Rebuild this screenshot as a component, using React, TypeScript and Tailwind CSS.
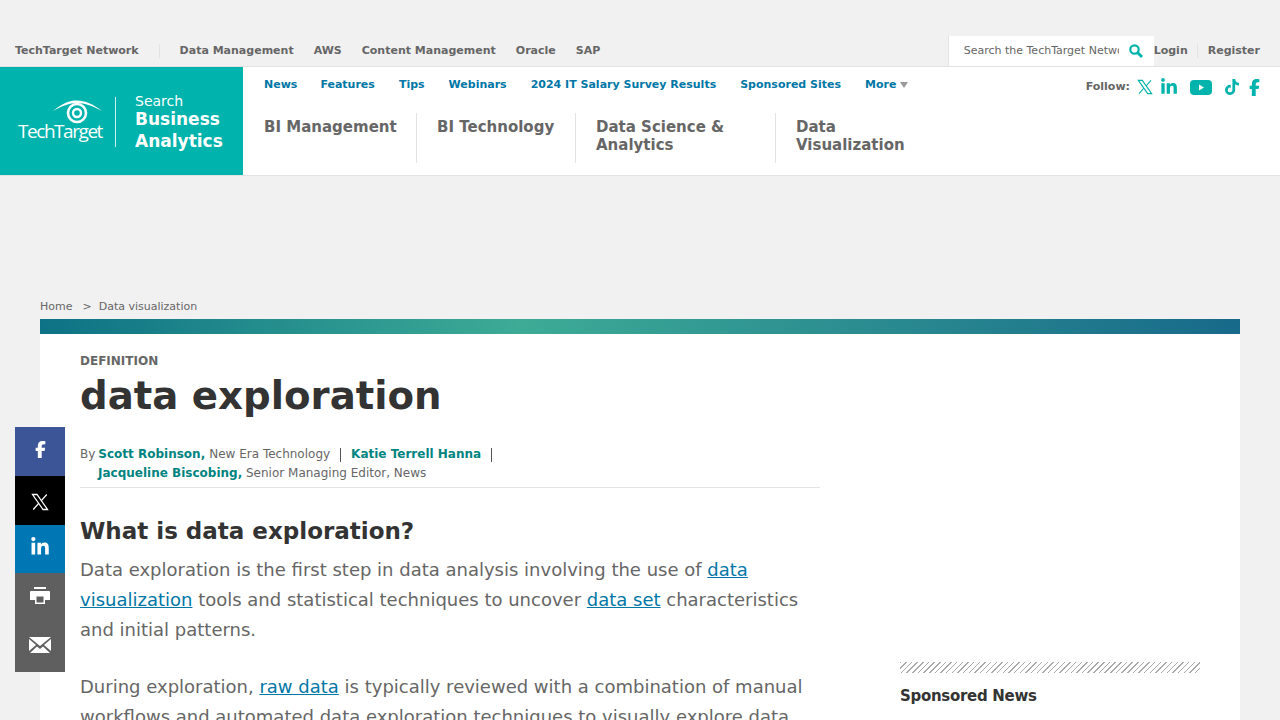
import { FaFacebookF, FaLinkedinIn, FaTiktok } from "react-icons/fa6";

const network = ["Data Management", "AWS", "Content Management", "Oracle", "SAP"];
const subNav = ["Features", "Tips", "Webinars", "2024 IT Salary Survey Results", "Sponsored Sites"];

function EyeLogo() {
  return (
    <svg width="50" height="28" viewBox="0 0 50 28" className="block">
      <path d="M0 11 C10 3 16 0.5 24 0.5 C32 0.5 40 4 49 11 C40 6 32 3 24 3 C16 3 9 6 0 11 Z" fill="#fff" />
      <circle cx="24" cy="13" r="9" fill="none" stroke="#fff" strokeWidth="2.6" />
      <circle cx="24" cy="13" r="4" fill="none" stroke="#fff" strokeWidth="2.4" />
    </svg>
  );
}

function SearchIcon() {
  return (
    <svg width="14" height="14" viewBox="0 0 14 14" fill="none" stroke="currentColor" className="ml-[10px]">
      <circle cx="5.5" cy="5.5" r="4.2" strokeWidth="2.2" />
      <path d="M8.5 8.5 L13 13" strokeWidth="2.8" />
    </svg>
  );
}

function XIcon({ size }: { size: number }) {
  return (
    <svg width={size} height={size} viewBox="0 0 24 24" fill="none" stroke="currentColor" strokeWidth="1.7">
      <path d="M2 2 H8 L22 22 H16 Z" />
      <path d="M21 2 L13.5 10.5 M3 22 L10.5 13.5" />
    </svg>
  );
}

function YoutubeIcon() {
  return (
    <svg width="22" height="15" viewBox="0 0 22 15">
      <rect width="22" height="15" rx="4" fill="currentColor" />
      <path d="M9 4.5 L14 7.5 L9 10.5 Z" fill="#fff" />
    </svg>
  );
}

function PrintIcon() {
  return (
    <svg width="20" height="17" viewBox="0 0 20 17">
      <rect x="4" y="0" width="12" height="2" fill="#fff" />
      <path d="M1 4 H19 Q20 4 20 5 V13 H0 V5 Q0 4 1 4 Z" fill="#fff" />
      <rect x="5.75" y="8.75" width="8.5" height="7.5" fill="#5f5f5f" stroke="#fff" strokeWidth="1.5" />
    </svg>
  );
}

function MailIcon() {
  return (
    <svg width="22" height="16" viewBox="0 0 22 16">
      <path d="M0 0 L22 0 L11 9 Z" fill="#fff" />
      <path d="M0 2 L7 8 L0 14 Z M22 2 L15 8 L22 14 Z" fill="#fff" />
      <path d="M1 16 L8 9.5 L11 12 L14 9.5 L21 16 Z" fill="#fff" />
    </svg>
  );
}

function TopBar() {
  return (
    <div className="flex h-[67px] items-end border-b border-[#e3e3e3] bg-[#f1f1f1]">
      <div className="flex h-[30px] w-full items-center text-[11px] font-bold text-[#666]">
        <span className="ml-[15px]">TechTarget Network</span>
        <span className="mx-5 h-3.5 w-px bg-[#e3e3e3]" />
        <div className="flex gap-5">
          {network.map((item) => (
            <span key={item}>{item}</span>
          ))}
        </div>
        <div className="ml-auto flex h-full w-[206px] items-center border-l border-[#e3e3e3] bg-white pl-[15px] text-[#00b3ac]">
          <input
            readOnly
            placeholder="Search the TechTarget Network"
            className="w-[155px] bg-transparent text-[11px] font-normal outline-none placeholder:text-[#666]"
          />
          <SearchIcon />
        </div>
        <span>Login</span>
        <span className="ml-[9px] mr-[10px] h-3.5 w-px bg-[#e3e3e3]" />
        <span className="mr-5">Register</span>
      </div>
    </div>
  );
}

function Header() {
  return (
    <header className="flex h-[109px] border-b border-[#e3e3e3] bg-white">
      <div className="flex h-[108px] w-[243px] shrink-0 items-center bg-[#00b3ac] pl-[18px] text-white">
        <div className="flex w-[84px] flex-col">
          <div className="ml-[35px]">
            <EyeLogo />
          </div>
          <span className="-mt-[9px] whitespace-nowrap font-['Open_Sans'] text-[19px] leading-6 font-medium tracking-[-1.45px]">
            TechTarget
          </span>
        </div>
        <div className="ml-[13px] mt-0.5 h-[50px] w-px bg-white/80" />
        <div className="ml-[19px] pt-1">
          <div className="text-[14px] leading-[14px]">Search</div>
          <div className="text-[17px] leading-[22px] font-bold">Business</div>
          <div className="text-[17px] leading-[22px] font-bold">Analytics</div>
        </div>
      </div>
      <div className="min-w-0 flex-1 pl-[21px]">
        <div className="flex h-9 items-start pt-[10px] text-[11px] font-bold text-[#0077a6]">
          <div className="flex gap-6">
            <span className="-mr-px">News</span>
            {subNav.map((item) => (
              <span key={item}>{item}</span>
            ))}
            <span className="flex items-center gap-1">
              More
              <span className="h-0 w-0 border-x-4 border-t-[6px] border-x-transparent border-t-[#999]" />
            </span>
          </div>
          <div className="ml-auto mr-[17px] flex items-center pt-px text-[#00b3ac]">
            <span className="text-[11px] text-[#666]">Follow:</span>
            <span className="ml-[7px]">
              <XIcon size={16} />
            </span>
            <FaLinkedinIn className="ml-[7px] text-[18px]" />
            <span className="ml-[12px]">
              <YoutubeIcon />
            </span>
            <FaTiktok className="ml-[12px] text-[16px]" />
            <FaFacebookF className="ml-[6px] text-[17px]" />
          </div>
        </div>
        <nav className="flex text-[15px] font-bold leading-[18px] text-[#666]">
          <div className="mt-[10px] h-[50px] w-[153px] border-r border-[#e3e3e3] pt-[5px]">BI Management</div>
          <div className="mt-[10px] h-[50px] w-[159px] border-r border-[#e3e3e3] pl-5 pt-[5px]">BI Technology</div>
          <div className="mt-[10px] h-[50px] w-[200px] border-r border-[#e3e3e3] pl-5 pt-[5px]">
            Data Science &amp;
            <br />
            Analytics
          </div>
          <div className="mt-[10px] pl-5 pt-[5px]">
            Data
            <br />
            Visualization
          </div>
        </nav>
      </div>
    </header>
  );
}

function ShareRail() {
  const itemClass = "flex items-center justify-center text-white";
  return (
    <div className="absolute left-[15px] top-[427px] w-[50px]">
      <div className={`${itemClass} h-[49px] bg-[#3b5596] pb-[5px] text-[17px]`}>
        <FaFacebookF />
      </div>
      <div className={`${itemClass} h-[49px] bg-black pt-[3px]`}>
        <XIcon size={18} />
      </div>
      <div className={`${itemClass} h-[48px] bg-[#0077b5] pb-[5px] text-[20px]`}>
        <FaLinkedinIn />
      </div>
      <div className={`${itemClass} h-[49px] bg-[#5f5f5f] pb-[5px]`}>
        <PrintIcon />
      </div>
      <div className={`${itemClass} h-[50px] bg-[#5f5f5f] pb-[4px]`}>
        <MailIcon />
      </div>
    </div>
  );
}

function Article() {
  const linkClass = "text-[#0077a6] underline";
  return (
    <div className="w-[740px] shrink-0">
      <div className="pt-[19px] text-[12px] leading-[16px] font-bold text-[#666]">DEFINITION</div>
      <h1 className="mt-[2px] text-[38.7px] leading-[50px] font-bold text-[#333]">data exploration</h1>
      <div className="mt-[24px] border-b border-[#e3e3e3] pb-[4px] text-[12px] leading-[19px] text-[#666]">
        <div className="flex items-center">
          <span>By</span>
          <span className="ml-[3px] font-bold text-[#00847f]">Scott Robinson,</span>
          <span className="ml-1">New Era Technology</span>
          <span className="mx-[10px] h-3.5 w-px bg-[#555]" />
          <span className="font-bold text-[#00847f]">Katie Terrell Hanna</span>
          <span className="ml-[10px] h-3.5 w-px bg-[#555]" />
        </div>
        <div className="pl-[18px]">
          <span className="font-bold text-[#00847f]">Jacqueline Biscobing,</span> Senior Managing Editor, News
        </div>
      </div>
      <h2 className="mt-[27px] text-[23px] leading-[32px] font-bold text-[#333]">What is data exploration?</h2>
      <p className="mt-[8px] text-[18px] leading-[30px] text-[#666]">
        Data exploration is the first step in data analysis involving the use of{" "}
        <a className={linkClass}>data visualization</a> tools and statistical techniques to uncover{" "}
        <a className={linkClass}>data set</a> characteristics and initial patterns.
      </p>
      <p className="mt-[27px] text-[18px] leading-[30px] text-[#666]">
        During exploration, <a className={linkClass}>raw data</a> is typically reviewed with a combination of manual
        workflows and automated data exploration techniques to visually explore data
      </p>
    </div>
  );
}

export default function App() {
  return (
    <div className="relative h-screen overflow-hidden bg-[#f1f1f1] font-['DejaVu_Sans',sans-serif]">
      <TopBar />
      <Header />
      <div className="mx-10">
        <div className="flex h-[143px] items-end pb-[4px] text-[11px] leading-4 text-[#666]">
          <span>Home</span>
          <span className="ml-[10px] mr-[7px]">&gt;</span>
          <span>Data visualization</span>
        </div>
        <div className="h-[15px] bg-[linear-gradient(90deg,#0d7285_0%,#3dab96_40%,#176a8a_100%)]" />
        <div className="flex bg-white pl-10">
          <Article />
          <aside className="ml-[80px] w-[300px] pt-[328px]">
            <div className="h-[11px] bg-[repeating-linear-gradient(135deg,#aaa_0,#aaa_1px,#fff_1px,#fff_4px)]" />
            <h3 className="mt-[13px] text-[15px] leading-[20px] font-bold tracking-[-0.3px] text-[#333]">Sponsored News</h3>
          </aside>
        </div>
      </div>
      <ShareRail />
    </div>
  );
}
